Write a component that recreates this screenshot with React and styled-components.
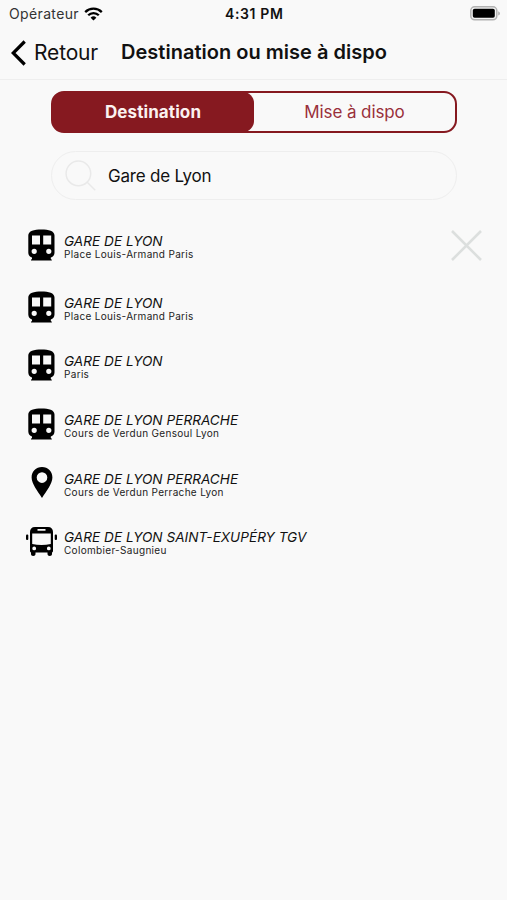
import React from "react";
import styled, { createGlobalStyle } from "styled-components";

const colors = {
  background: "#f9f9f9",
  red: "#861920",
  text: "#111111",
  line: "#eeeeee",
};

const GlobalStyle = createGlobalStyle`
  * {
    box-sizing: border-box;
  }
  body {
    margin: 0;
    background: ${colors.background};
    color: ${colors.text};
    font-family: Inter, "Liberation Sans", sans-serif;
  }
  svg {
    display: block;
    flex: none;
  }
`;

const Screen = styled.div`
  height: 900px;
  display: flex;
  flex-direction: column;
`;

const StatusBar = styled.div`
  height: 27px;
  padding: 0 7px 0 9px;
  display: grid;
  grid-template-columns: 216px 1fr auto;
  align-items: center;
`;

const Carrier = styled.div`
  display: flex;
  align-items: center;
  gap: 5px;
  font-size: 14px;
  letter-spacing: 0.36px;
  color: #333;
`;

const Time = styled.div`
  font-size: 14px;
  font-weight: 600;
  letter-spacing: 0.62px;
`;

const Header = styled.header`
  height: 53px;
  padding: 0 0 1px 11px;
  display: flex;
  align-items: center;
  border-bottom: 1px solid ${colors.line};
`;

const Back = styled.div`
  width: 110px;
  display: flex;
  align-items: center;
  gap: 8px;
  font-size: 21px;
  letter-spacing: -0.15px;
`;

const Title = styled.h1`
  margin: 0;
  padding-bottom: 1px;
  font-size: 20px;
  font-weight: 600;
  white-space: nowrap;
  letter-spacing: 0.02px;
`;

const Tabs = styled.div`
  width: 406px;
  height: 42px;
  margin: 11px 0 0 51px;
  display: flex;
  border: 2px solid ${colors.red};
  border-radius: 13px;
`;

const Tab = styled.div`
  flex: ${({ $active }) => ($active ? "0 0 202px" : "1")};
  margin: ${({ $active }) => ($active ? "-1px 0 -1px -1px" : "0")};
  display: flex;
  align-items: center;
  justify-content: center;
  border-radius: 11px;
  background: ${({ $active }) => ($active ? colors.red : "transparent")};
  color: ${({ $active }) => ($active ? "#fbf1f0" : "#99303b")};
  font-size: 17px;
  font-weight: ${({ $active }) => ($active ? 700 : 400)};
  letter-spacing: ${({ $active }) => ($active ? "0.1px" : "-0.1px")};
`;

const Search = styled.div`
  width: 406px;
  height: 49px;
  margin: 18px 0 0 51px;
  padding-left: 13px;
  display: flex;
  align-items: center;
  gap: 12px;
  border: 1px solid ${colors.line};
  border-radius: 25px;
  font-size: 17px;
  letter-spacing: -0.22px;
`;

const List = styled.div`
  margin-top: 13px;
  display: flex;
  flex-direction: column;
`;

const Row = styled.div`
  height: ${({ $first }) => ($first ? 64.4 : 58.67)}px;
  padding: 0 25px 0 25px;
  display: flex;
  align-items: center;
`;

const IconBox = styled.div`
  width: 33px;
  margin-right: 6px;
  display: flex;
  justify-content: center;
`;

const Place = styled.div`
  flex: 1;
  padding-top: 2.8px;
  white-space: nowrap;
`;

const Name = styled.div`
  font-size: 13.6px;
  line-height: 16px;
  font-style: italic;
  letter-spacing: 0.02px;
`;

const Address = styled.div`
  font-size: 10px;
  line-height: 11px;
  letter-spacing: 0.32px;
  color: #222;
`;

const WifiIcon = () => (
  <svg width="19" height="14" viewBox="0 0 19 14" fill="none" stroke="#000" strokeWidth="2.3">
    <path d="M1.2 5.1a11.8 11.8 0 0 1 16.6 0" />
    <path d="M4.2 8.3a7.5 7.5 0 0 1 10.6 0" />
    <path d="M9.5 13.6 6.6 10.7a4.1 4.1 0 0 1 5.8 0z" fill="#000" stroke="none" />
  </svg>
);

const BatteryIcon = () => (
  <svg width="30" height="15" viewBox="0 0 30 15">
    <rect x="0.8" y="0.8" width="26" height="13" rx="3.8" fill="#f4f4f4" stroke="#b2b2b2" strokeWidth="1.5" />
    <rect x="2.8" y="2.8" width="22" height="9" rx="1.8" />
    <path d="M28.2 5.2q1.8.8 1.8 2.2t-1.8 2.2z" fill="#b2b2b2" />
  </svg>
);

const BackIcon = () => (
  <svg width="15" height="26" viewBox="0 0 15 26" fill="none" stroke="#000" strokeWidth="3.2">
    <path d="M13.7 1.5 2.2 13l11.5 11.5" />
  </svg>
);

const SearchIcon = () => (
  <svg width="31" height="31" viewBox="0 0 31 31" fill="none" stroke="#e9e9e9" strokeWidth="1.5">
    <circle cx="13.4" cy="13.4" r="12.3" />
    <path d="m22.2 22.2 8 8" />
  </svg>
);

const CloseIcon = () => (
  <svg width="31" height="31" viewBox="0 0 31 31" stroke="#dcdfde" strokeWidth="2.6">
    <path d="m1 1 29 29M30 1 1 30" />
  </svg>
);

const TrainIcon = () => (
  <svg width="27" height="32" viewBox="0 0 27 32">
    <path
      fillRule="evenodd"
      d="M.3 6.5C.3 2 6 .5 13.4.5S26.5 2 26.5 6.500v17c0 2.700-1.500 4.300-3.700 4.900v1.500l1 .9v.7H3v-.7l1-.9v-1.500C1.800 27.800.3 26.200.3 23.500zM4 6.600v9h8v-9zm11.200 0v9h8v-9zM6.200 19.700a2.600 2.600 0 1 0 0 5.200 2.600 2.600 0 0 0 0-5.200zm14.600 0a2.600 2.600 0 1 0 0 5.200 2.600 2.600 0 0 0 0-5.200z"
    />
  </svg>
);

const PinIcon = () => (
  <svg width="22" height="31" viewBox="0 0 22 31">
    <path
      fillRule="evenodd"
      d="M11 0C5 0 .6 4.600.6 10.500.6 16.500 6.500 24 11 31c4.500-7 10.400-14.500 10.400-20.500C21.400 4.600 17 0 11 0zm0 5.300a5.300 5.300 0 1 1 0 10.600 5.300 5.300 0 0 1 0-10.600z"
    />
  </svg>
);

const BusIcon = () => (
  <svg width="31" height="29" viewBox="0 0 31 29">
    <path
      fillRule="evenodd"
      d="M9 0h13c3.300 0 5 2 5 5v19c0 .7-.4 1.200-1 1.500V27c0 1.300-.8 2-2.200 2s-2.300-.7-2.300-2v-1.500h-12V27c0 1.300-.9 2-2.300 2S5 28.300 5 27v-1.500c-.6-.3-1-.8-1-1.500V5c0-3 1.700-5 5-5zm2.500 1.900v1.900h8V1.900zM6.200 6.500V17q9.300 1.800 18.600 0V6.500zm2 13a1.900 1.900 0 1 0 0 3.800 1.900 1.900 0 0 0 0-3.800zm14.600 0a1.900 1.900 0 1 0 0 3.800 1.900 1.900 0 0 0 0-3.800z"
    />
    <rect x="0" y="7.5" width="2.3" height="5.5" rx="1" />
    <rect x="28.7" y="7.5" width="2.3" height="5.5" rx="1" />
  </svg>
);

const places = [
  { icon: TrainIcon, name: "GARE DE LYON", address: "Place Louis-Armand Paris" },
  { icon: TrainIcon, name: "GARE DE LYON", address: "Place Louis-Armand Paris" },
  { icon: TrainIcon, name: "GARE DE LYON", address: "Paris" },
  { icon: TrainIcon, name: "GARE DE LYON PERRACHE", address: "Cours de Verdun Gensoul Lyon" },
  { icon: PinIcon, name: "GARE DE LYON PERRACHE", address: "Cours de Verdun Perrache Lyon" },
  { icon: BusIcon, name: "GARE DE LYON SAINT-EXUPÉRY TGV", address: "Colombier-Saugnieu" },
];

const App = () => {
  return (
    <Screen>
      <GlobalStyle />
      <StatusBar>
        <Carrier>
          Opérateur <WifiIcon />
        </Carrier>
        <Time>4:31 PM</Time>
        <BatteryIcon />
      </StatusBar>
      <Header>
        <Back>
          <BackIcon /> Retour
        </Back>
        <Title>Destination ou mise à dispo</Title>
      </Header>
      <Tabs>
        <Tab $active>Destination</Tab>
        <Tab>Mise à dispo</Tab>
      </Tabs>
      <Search>
        <SearchIcon />
        Gare de Lyon
      </Search>
      <List>
        {places.map(({ icon: Icon, name, address }, index) => (
          <Row key={index} $first={index === 0}>
            <IconBox>
              <Icon />
            </IconBox>
            <Place>
              <Name>{name}</Name>
              <Address>{address}</Address>
            </Place>
            {index === 0 && <CloseIcon />}
          </Row>
        ))}
      </List>
    </Screen>
  );
};

export default App;
